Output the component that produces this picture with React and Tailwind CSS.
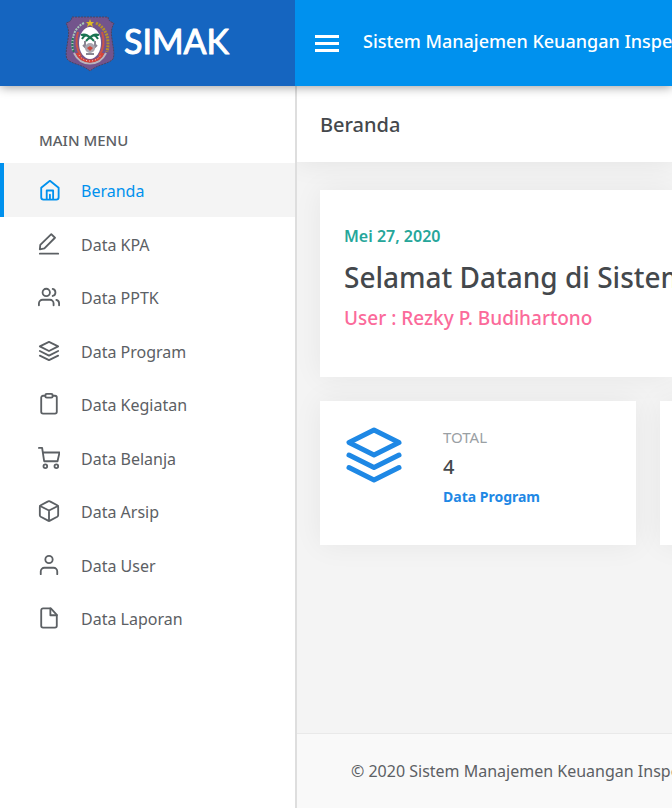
import React from 'react';

const Icon = ({ children, className }) => (
  <svg
    viewBox="0 0 24 24"
    fill="none"
    stroke="currentColor"
    strokeWidth="2"
    strokeLinecap="round"
    strokeLinejoin="round"
    aria-hidden="true"
    className={className}
  >
    {children}
  </svg>
);

const icons = {
  home: (
    <>
      <path d="M3.500 9.500 13 2l9.500 7.500V20a2.500 2.500 0 0 1-2.500 2.500H6A2.500 2.500 0 0 1 3.500 20z" />
      <path d="M9.500 22v-9.500h7V22M13 17v5" />
    </>
  ),
  edit: (
    <>
      <path d="M14.500 1.200 18.500 5.200 7 16.800 2 17.800 2.500 13z" />
      <path d="M2 22.500h20" />
    </>
  ),
  users: (
    <>
      <path d="M17 21v-2a4 4 0 0 0-4-4H5a4 4 0 0 0-4 4v2" />
      <circle cx="9" cy="7" r="4" />
      <path d="M23 21v-2a4 4 0 0 0-3-3.870M16 3.130a4 4 0 0 1 0 7.750" />
    </>
  ),
  layers: (
    <>
      <path d="M12 2 2 7l10 5 10-5z" />
      <path d="m2 17 10 5 10-5M2 12l10 5 10-5" />
    </>
  ),
  clipboard: (
    <>
      <path d="M16 3h2.500a2 2 0 0 1 2 2v15.500a2 2 0 0 1-2 2h-13a2 2 0 0 1-2-2V5a2 2 0 0 1 2-2H8" />
      <rect x="8" y="1" width="8" height="4" rx="1.500" />
    </>
  ),
  cart: (
    <>
      <circle cx="8" cy="21" r="2" />
      <circle cx="20" cy="21" r="2" />
      <path d="M1 1h3.500l2.200 14.500h14.600L23.500 6H5.300" />
    </>
  ),
  box: (
    <>
      <path d="M22 16.500v-9a2 2 0 0 0-1-1.700l-8-4.300a2 2 0 0 0-2 0L3 5.800a2 2 0 0 0-1 1.700v9a2 2 0 0 0 1 1.700l8 4.300a2 2 0 0 0 2 0l8-4.300a2 2 0 0 0 1-1.700z" />
      <path d="M2.300 6.500 12 11.500l9.700-5M12 22.500v-11" />
    </>
  ),
  user: (
    <>
      <path d="M21 22v-3a4 4 0 0 0-4-4H7a4 4 0 0 0-4 4v3" />
      <circle cx="12" cy="6" r="4" />
    </>
  ),
  file: (
    <>
      <path d="M14 1.500H5.500a2 2 0 0 0-2 2v17a2 2 0 0 0 2 2h13a2 2 0 0 0 2-2V8.500z" />
      <path d="M13.500 1.500v7.500h7" />
    </>
  ),
};

const menuItems = [
  { name: 'Beranda', path: '#beranda', icon: 'home', active: true },
  { name: 'Data KPA', path: '#kpa', icon: 'edit' },
  { name: 'Data PPTK', path: '#pptk', icon: 'users' },
  { name: 'Data Program', path: '#program', icon: 'layers' },
  { name: 'Data Kegiatan', path: '#kegiatan', icon: 'clipboard' },
  { name: 'Data Belanja', path: '#belanja', icon: 'cart' },
  { name: 'Data Arsip', path: '#arsip', icon: 'box' },
  { name: 'Data User', path: '#user', icon: 'user' },
  { name: 'Data Laporan', path: '#laporan', icon: 'file' },
];

const Emblem = () => (
  <svg viewBox="0 0 50 56" aria-hidden="true" className="h-14 w-[50px] shrink-0">
    <path
      d="M7 1h36c0 3 2 5 6 6-3 6-3 10-2 16 1 8 3 15 1 20-4 5-15 5-23 12C17 48 6 48 2 43c-2-5 0-12 1-20 1-6 1-10-2-16 4-1 6-3 6-6z"
      fill="#73548c"
      stroke="#4c4460"
      strokeWidth="1"
      strokeDasharray="2 1"
    />
    <path d="M19 7C9 12 6 22 8 35" fill="none" stroke="#a9c9b9" strokeWidth="2" strokeDasharray="2 1" />
    <path d="M8 22c-1 5-1 9 1 14" fill="none" stroke="#25795b" strokeWidth="2" strokeDasharray="2 1" />
    <path d="M31 7c10 5 14 15 11 29" fill="none" stroke="#b79328" strokeWidth="3" strokeDasharray="2 1" />
    <path d="M9 37c7 14 25 14 32 0" fill="none" stroke="#b9b5bd" strokeWidth="2" />
    <path d="M13 16c-3 9-1 18 3 24M37 16c3 9 1 18-3 24" fill="none" stroke="#c95549" strokeWidth="2" />
    <path d="M12 37c5 11 21 11 26 0" fill="none" stroke="#d64338" strokeWidth="3" />
    <path d="M14 39c5 8 17 8 22 0" fill="none" stroke="#f0c3bd" strokeWidth="1" strokeDasharray="1 2" />
    <ellipse cx="25" cy="27" rx="11" ry="16" fill="#fff" />
    <path
      d="M17 23c2-4 5-5 8-1 3-4 6-3 8 1M16 19c4-1 7 0 9 3 2-3 5-4 9-3M21 25l4-4 4 4"
      fill="none"
      stroke="#197451"
      strokeWidth="2"
    />
    <path d="M20 25v5M30 25v5M18 29l3 3h8l3-3M21 38h8" fill="none" stroke="#8b8793" strokeWidth="2" />
    <circle cx="25" cy="32" r="5" fill="#aaa6b0" />
    <path d="m22 32 3-2 3 2-3 3z" fill="#cc493d" />
    <path d="m25 3 1 3h3l-2 2 1 3-3-2-3 2 1-3-2-2h3z" fill="#dfbc24" />
  </svg>
);

const Wordmark = () => (
  <svg viewBox="0 0 108 40" className="h-10 w-[108px] shrink-0 overflow-visible">
    <text
      x="1"
      y="30"
      fill="#fff"
      stroke="#fff"
      strokeWidth="1"
      strokeLinejoin="round"
      className="font-[Lato,sans-serif] text-[34px] font-normal"
    >
      SIMAK
    </text>
  </svg>
);

const Sidebar = () => (
  <aside className="relative flex w-[297px] shrink-0 flex-col border-r-2 border-[#dedede] bg-white pt-[42px]">
    <h2 className="pl-[39px] text-[15px] font-medium leading-6 text-[#5c6064]">MAIN MENU</h2>
    <nav className="pt-[11px]">
      <ul>
        {menuItems.map((item) => (
          <li key={item.name} className="h-[53px] odd:h-[54px]">
            <a
              href={item.path}
              aria-current={item.active ? 'page' : undefined}
              className={`flex h-full items-center border-l-4 pl-[34px] text-[16px] ${
                item.active ? 'border-[#0091ee] bg-[#f4f4f4] text-[#0091ee]' : 'border-transparent text-[#5c6064]'
              }`}
            >
              <Icon className="mr-[21px] size-[22px] shrink-0">{icons[item.icon]}</Icon>
              <span className="pt-0.5">{item.name}</span>
            </a>
          </li>
        ))}
      </ul>
    </nav>
  </aside>
);

const StatCard = ({ children }) => (
  <article className="flex h-36 w-[316px] shrink-0 bg-white px-6 pt-6 shadow-[0_0_28px_rgba(0,0,0,0.06)]">
    {children}
  </article>
);

export default function App() {
  return (
    <div className="flex min-h-screen flex-col overflow-hidden whitespace-nowrap bg-[#f4f4f4] font-['Noto_Sans','Open_Sans',sans-serif]">
      <header className="relative z-10 flex h-[86px] bg-[#0091ee] text-white shadow-[0_1px_10px_rgba(0,0,0,0.4)]">
        <a
          href="#beranda"
          className="flex w-[295px] shrink-0 items-center justify-center gap-2 bg-[#1565c0] pt-0.5"
        >
          <Emblem />
          <Wordmark />
        </a>
        <div className="flex items-center pl-5">
          <button type="button" aria-label="Menu" className="mr-6 flex w-6 flex-col gap-1">
            <span className="h-[3px] bg-white" />
            <span className="h-[3px] bg-white" />
            <span className="h-[3px] bg-white" />
          </button>
          <p className="pb-1 text-[18px] font-medium leading-6">Sistem Manajemen Keuangan Inspektorat</p>
        </div>
      </header>

      <div className="flex grow">
        <Sidebar />
        <main className="flex min-w-0 grow flex-col">
          <div className="flex h-[76px] items-center bg-white pl-[23px] pt-0.5 shadow-[0_0_28px_rgba(0,0,0,0.08)]">
            <h1 className="text-[20px] font-medium leading-7 text-[#44484c]">Beranda</h1>
          </div>

          <div className="flex grow flex-col gap-6 overflow-hidden pl-[23px] pt-7">
            <section className="h-[187px] bg-white px-6 pt-[34px] shadow-[0_0_28px_rgba(0,0,0,0.06)]">
              <p className="text-[16px] font-semibold leading-6 text-[#26a69a]">Mei 27, 2020</p>
              <h2 className="py-1 text-[28px] font-medium leading-[50px] text-[#44484c]">
                Selamat Datang di Sistem
              </h2>
              <p className="text-[19px] font-medium leading-6 text-[#fb6a9a]">User : Rezky P. Budihartono</p>
            </section>
            <section className="flex gap-6">
              <StatCard>
                <Icon className="mr-[39px] size-[60px] shrink-0 text-[#1e88e5]">{icons.layers}</Icon>
                <div>
                  <p className="text-[15px] leading-6 text-[#9aa0a4]">TOTAL</p>
                  <p className="text-[20px] font-medium leading-9 text-[#44484c]">4</p>
                  <p className="text-[14px] font-bold leading-6 text-[#1e88e5]">Data Program</p>
                </div>
              </StatCard>
              <StatCard />
            </section>
          </div>

          <footer className="flex h-[75px] items-center overflow-hidden border-t border-[#e9e9e9] bg-[#f9f9f9] pl-[54px] text-[16px] text-[#5c6064]">
            © 2020 Sistem Manajemen Keuangan Inspektorat
          </footer>
        </main>
      </div>
    </div>
  );
}
